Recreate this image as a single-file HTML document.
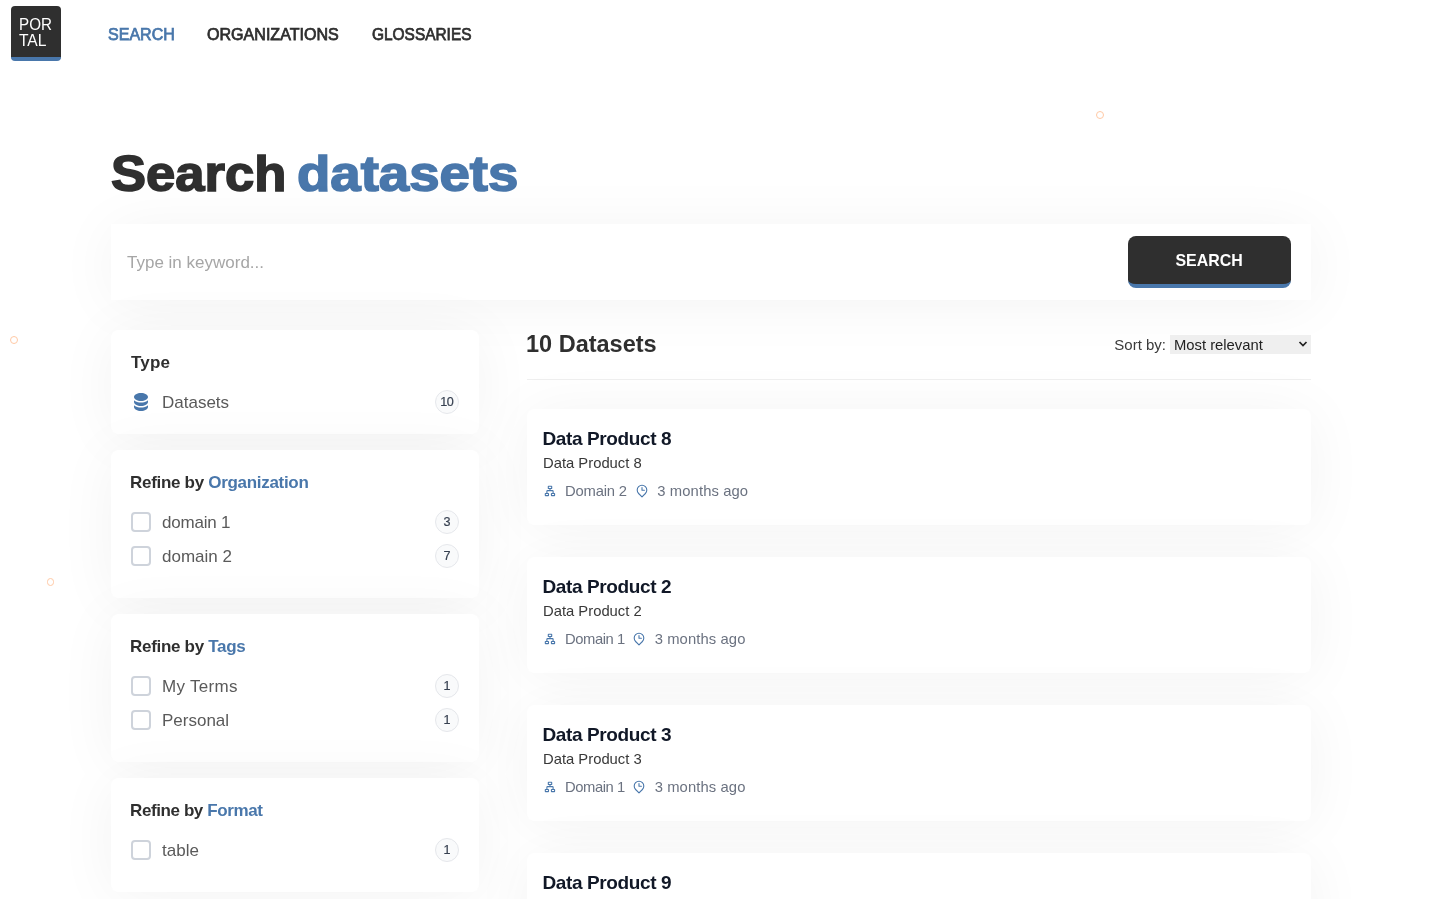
<!DOCTYPE html>
<html lang="en">
<head>
<meta charset="utf-8">
<title>Search datasets</title>
<style>
*{box-sizing:border-box;margin:0;padding:0}
html,body{width:1448px;height:899px;overflow:hidden;background:#fff}
body{font-family:"Liberation Sans",Arial,sans-serif;color:#2f2f2f;position:relative}
#page{position:absolute;left:0;top:0;width:1448px;height:899px;overflow:hidden;will-change:transform}
a{text-decoration:none;color:inherit}
.logo{position:absolute;left:11px;top:6px;width:50px;height:55px;background:#2f2f2f;border-bottom:4px solid #4977ab;border-radius:4px;color:#fff;font-size:16.6px;line-height:16px}
.logo span{position:absolute;left:8px;white-space:nowrap;transform-origin:0 0;transform:scaleX(.915)}
.nav{position:absolute;left:108px;top:23px;height:24px;font-size:16.6px;line-height:24px;color:#2f2f2f;white-space:nowrap}
.nav a{position:absolute;top:0;-webkit-text-stroke:.75px currentColor;transform-origin:0 50%}
.nav a.active{color:#4977ab}
.dot{position:absolute;width:8px;height:8px;border-radius:50%;border:1.5px solid #ffc8a4}
h1{position:absolute;left:111px;top:144px;height:60px;font-size:49.5px;line-height:60px;font-weight:700;color:#2f2f2f;white-space:nowrap;-webkit-text-stroke:1.6px currentColor}
h1 span{position:absolute;top:0;display:block;transform-origin:0 50%}
h1 .w1{left:0;transform:scaleX(1.062)}
h1 .w2{left:186px;color:#4977ab;transform:scaleX(1.102)}
.card{background:#fff;box-shadow:0 4px 60px rgba(0,0,0,.05)}
.searchbar{position:absolute;left:111px;top:224px;width:1200px;height:76px}
.searchbar .ph{position:absolute;left:16px;top:27px;font-size:17px;line-height:24px;color:#a6a6a6;white-space:nowrap}
.searchbar button span{display:inline-block;transform:scaleX(.96);position:relative;top:1px}
.searchbar button{position:absolute;left:1017px;top:12px;width:163px;height:52px;background:#2f2f2f;border:0;border-bottom:4px solid #4977ab;border-radius:8px;color:#fff;font:700 16.6px/24px "Liberation Sans",Arial,sans-serif;text-align:center;transform-origin:50% 50%}
aside{position:absolute;left:111px;top:330px;width:368px}
.facet{border-radius:8px;padding:20px;margin-bottom:16px;position:relative}
.facet h3{font-size:17px;line-height:24px;font-weight:700;color:#2f2f2f;height:24px;white-space:nowrap;letter-spacing:-.3px;margin-left:-1px;position:relative;top:1px}
.facet h3 span{color:#4977ab}
.rows{margin-top:16px}
.row{display:flex;align-items:center;height:24px;margin-bottom:10px;position:relative;color:#5a5a5a;font-size:17px;line-height:24px;white-space:nowrap}
.row .cb{width:20px;height:20px;border:2px solid #ced3db;border-radius:4px;background:#fff;margin-right:11px;flex:none}
.row .ic{width:20px;height:20px;margin-right:11px;flex:none;display:flex;align-items:center;justify-content:center}
.row .lb{position:relative;top:1px}
.row .badge{position:absolute;right:0;top:0;width:24px;height:24px;border-radius:50%;border:1px solid #e5e7eb;background:#f9fafb;color:#374151;font-size:12.6px;line-height:22px;text-align:center;-webkit-text-stroke:.2px currentColor}
.results{position:absolute;left:527px;top:330px;width:784px}
.results h2{position:absolute;left:-1px;top:0;font-size:23.5px;line-height:28px;font-weight:700;color:#2f2f2f;white-space:nowrap}
.sort{position:absolute;right:0;top:5px;height:19px;display:flex;align-items:center;font-size:15px;line-height:19px;color:#3a3a3a;white-space:nowrap;letter-spacing:0}
.sort .sel{margin-left:4px;width:141px;height:19px;background:#efefef;font-size:14.8px;line-height:21px;padding-left:4px;color:#222;position:relative;letter-spacing:0}
.sort .sel svg{position:absolute;right:3px;top:6px}
.hr{position:absolute;left:0;top:49px;width:784px;height:1px;background:#efefef}
.item{position:absolute;left:0;width:784px;height:116px;border-radius:8px;padding:16px}
.item h4{font-size:19px;line-height:28px;font-weight:700;color:#111827;white-space:nowrap;letter-spacing:-.38px;margin-left:-.5px}
.item p{font-size:14.8px;line-height:20px;color:#383838;white-space:nowrap}
.item .meta{display:flex;align-items:center;margin-top:8px;font-size:14.8px;line-height:20px;color:#6b7280;white-space:nowrap}
.item .meta svg{flex:none}
.item .meta .i1{margin-left:0}
.item .meta .t1{margin-left:9px;letter-spacing:-.2px;margin-right:.3px}
.item .meta .i2{margin-left:9px}
.item .meta .t2{margin-left:9.3px;letter-spacing:.1px}
</style>
</head>
<body>
<div id="page">
<a class="logo" href="#"><span style="top:11px">POR</span><span style="top:27px;left:8px;transform:scaleX(.94)">TAL</span></a>
<nav class="nav">
  <a class="active" href="#" style="left:0;transform:scaleX(.967)">SEARCH</a>
  <a href="#" style="left:99px;transform:scaleX(.968)">ORGANIZATIONS</a>
  <a href="#" style="left:264px;transform:scaleX(.93)">GLOSSARIES</a>
</nav>
<div class="dot" style="left:1096px;top:110.8px"></div>
<div class="dot" style="left:9.9px;top:335.8px;width:8.2px;height:8.2px"></div>
<div class="dot" style="left:46.6px;top:578.4px;width:7.6px;height:7.6px"></div>

<h1><span class="w1">Search </span><span class="w2">datasets</span></h1>

<div class="card searchbar">
  <div class="ph">Type in keyword...</div>
  <button type="button"><span>SEARCH</span></button>
</div>

<aside>
  <div class="card facet" style="height:104px">
    <h3 style="letter-spacing:.2px;margin-left:0">Type</h3>
    <div class="rows">
      <div class="row"><span class="ic"><svg width="20" height="20" viewBox="0 0 20 20" fill="#4977ab"><path fill-rule="evenodd" clip-rule="evenodd" d="M10 1c3.866 0 7 1.79 7 4s-3.134 4-7 4-7-1.79-7-4 3.134-4 7-4zm5.694 8.13c.464-.264.91-.583 1.306-.952V10c0 2.21-3.134 4-7 4s-7-1.79-7-4V8.178c.396.37.842.688 1.306.953C5.838 10.006 7.854 10.5 10 10.5s4.162-.494 5.694-1.37zM3 13.179V15c0 2.21 3.134 4 7 4s7-1.79 7-4v-1.822c-.396.37-.842.688-1.306.953-1.532.875-3.548 1.369-5.694 1.369s-4.162-.494-5.694-1.37A7.009 7.009 0 013 13.179z"/></svg></span><span class="lb">Datasets</span><span class="badge" style="letter-spacing:-.7px;text-indent:-.7px">10</span></div>
    </div>
  </div>
  <div class="card facet" style="height:148px">
    <h3>Refine by <span>Organization</span></h3>
    <div class="rows">
      <div class="row"><span class="cb"></span><span class="lb" style="letter-spacing:-.2px">domain 1</span><span class="badge">3</span></div>
      <div class="row"><span class="cb"></span><span class="lb">domain 2</span><span class="badge">7</span></div>
    </div>
  </div>
  <div class="card facet" style="height:148px">
    <h3>Refine by <span>Tags</span></h3>
    <div class="rows">
      <div class="row"><span class="cb"></span><span class="lb" style="letter-spacing:.3px">My Terms</span><span class="badge">1</span></div>
      <div class="row"><span class="cb"></span><span class="lb">Personal</span><span class="badge">1</span></div>
    </div>
  </div>
  <div class="card facet" style="height:114px">
    <h3 style="letter-spacing:-.4px">Refine by <span>Format</span></h3>
    <div class="rows">
      <div class="row"><span class="cb"></span><span class="lb">table</span><span class="badge">1</span></div>
    </div>
  </div>
</aside>

<section class="results">
  <h2>10 Datasets</h2>
  <div class="sort">Sort by:<div class="sel">Most relevant<svg width="10" height="7" viewBox="0 0 10 7" fill="none" stroke="#222" stroke-width="1.7"><path d="M1.5 1l3.5 3.6 3.5-3.6"/></svg></div></div>
  <div class="hr"></div>
  <div class="card item" style="top:79px"><h4>Data Product 8</h4><p>Data Product 8</p><div class="meta"><svg class="i1" width="13" height="12" viewBox="0 0 13 12" fill="none" stroke="#4977ab" stroke-width="1.1" stroke-linejoin="round"><rect x="5.3" y="1.3" width="3.4" height="2.2" rx=".3"/><rect x="2.3" y="8.5" width="3.2" height="2.1" rx=".3"/><rect x="8.4" y="8.5" width="3.2" height="2.1" rx=".3"/><path d="M7 3.5V5.6M3.9 8.5V6.3Q3.9 5.6 4.6 5.6H9.4Q10.1 5.6 10.1 6.3V8.5"/></svg><span class="t1">Domain 2</span><svg class="i2" width="12" height="14" viewBox="0 0 12 14" fill="none" stroke="#4977ab" stroke-width="1.1" stroke-linejoin="round" stroke-linecap="round"><path d="M6 12.9 2.6 9.5a4.8 4.8 0 1 1 6.8 0z"/><path d="M6 3.6v2.6h2.4"/></svg><span class="t2">3 months ago</span></div></div>
  <div class="card item" style="top:227px"><h4>Data Product 2</h4><p>Data Product 2</p><div class="meta"><svg class="i1" width="13" height="12" viewBox="0 0 13 12" fill="none" stroke="#4977ab" stroke-width="1.1" stroke-linejoin="round"><rect x="5.3" y="1.3" width="3.4" height="2.2" rx=".3"/><rect x="2.3" y="8.5" width="3.2" height="2.1" rx=".3"/><rect x="8.4" y="8.5" width="3.2" height="2.1" rx=".3"/><path d="M7 3.5V5.6M3.9 8.5V6.3Q3.9 5.6 4.6 5.6H9.4Q10.1 5.6 10.1 6.3V8.5"/></svg><span class="t1" style="letter-spacing:-.45px;margin-right:-.4px">Domain 1</span><svg class="i2" width="12" height="14" viewBox="0 0 12 14" fill="none" stroke="#4977ab" stroke-width="1.1" stroke-linejoin="round" stroke-linecap="round"><path d="M6 12.9 2.6 9.5a4.8 4.8 0 1 1 6.8 0z"/><path d="M6 3.6v2.6h2.4"/></svg><span class="t2">3 months ago</span></div></div>
  <div class="card item" style="top:375px"><h4>Data Product 3</h4><p>Data Product 3</p><div class="meta"><svg class="i1" width="13" height="12" viewBox="0 0 13 12" fill="none" stroke="#4977ab" stroke-width="1.1" stroke-linejoin="round"><rect x="5.3" y="1.3" width="3.4" height="2.2" rx=".3"/><rect x="2.3" y="8.5" width="3.2" height="2.1" rx=".3"/><rect x="8.4" y="8.5" width="3.2" height="2.1" rx=".3"/><path d="M7 3.5V5.6M3.9 8.5V6.3Q3.9 5.6 4.6 5.6H9.4Q10.1 5.6 10.1 6.3V8.5"/></svg><span class="t1" style="letter-spacing:-.45px;margin-right:-.4px">Domain 1</span><svg class="i2" width="12" height="14" viewBox="0 0 12 14" fill="none" stroke="#4977ab" stroke-width="1.1" stroke-linejoin="round" stroke-linecap="round"><path d="M6 12.9 2.6 9.5a4.8 4.8 0 1 1 6.8 0z"/><path d="M6 3.6v2.6h2.4"/></svg><span class="t2">3 months ago</span></div></div>
  <div class="card item" style="top:523px"><h4>Data Product 9</h4><p>Data Product 9</p><div class="meta"><svg class="i1" width="13" height="12" viewBox="0 0 13 12" fill="none" stroke="#4977ab" stroke-width="1.1" stroke-linejoin="round"><rect x="5.3" y="1.3" width="3.4" height="2.2" rx=".3"/><rect x="2.3" y="8.5" width="3.2" height="2.1" rx=".3"/><rect x="8.4" y="8.5" width="3.2" height="2.1" rx=".3"/><path d="M7 3.5V5.6M3.9 8.5V6.3Q3.9 5.6 4.6 5.6H9.4Q10.1 5.6 10.1 6.3V8.5"/></svg><span class="t1">Domain 2</span><svg class="i2" width="12" height="14" viewBox="0 0 12 14" fill="none" stroke="#4977ab" stroke-width="1.1" stroke-linejoin="round" stroke-linecap="round"><path d="M6 12.9 2.6 9.5a4.8 4.8 0 1 1 6.8 0z"/><path d="M6 3.6v2.6h2.4"/></svg><span class="t2">3 months ago</span></div></div>
</section>
</div>
</body>
</html>
